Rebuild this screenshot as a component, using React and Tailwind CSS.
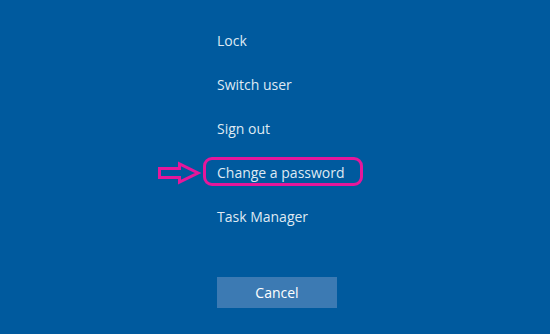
import React from 'react';

const items = ['Lock', 'Switch user', 'Sign out', 'Change a password', 'Task Manager'];

const Arrow = () => (
  <svg
    className="absolute left-[-60px] top-[11px]"
    width="46"
    height="24"
    viewBox="0 0 46 24"
    fill="none"
  >
    <path
      d="M2.5 7.5 H22.5 V3 L41 12 L22.5 21 V16.5 H2.5 Z"
      stroke="#e6179b"
      strokeWidth="3"
      strokeLinejoin="miter"
    />
  </svg>
);

const App = () => {
  return (
    <div
      className="w-[550px] h-[334px] bg-[#005a9e] text-[#dfe9f3] overflow-hidden"
      style={{ fontFamily: '"Open Sans", "Noto Sans", sans-serif' }}
    >
      <div className="flex flex-col pl-[217px] pt-[18px]">
        {items.map((name) => (
          <div key={name} className="relative h-[44px] flex items-center text-[14px]">
            {name === 'Change a password' && (
              <>
                <Arrow />
                <div className="absolute left-[-14px] top-[7px] w-[160px] h-[29px] rounded-[9px] border-[3px] border-[#e6179b]" />
              </>
            )}
            <span className="relative">{name}</span>
          </div>
        ))}
        <button className="mt-[39px] w-[120px] h-[31px] bg-[#3c7ab3] text-white text-[14px] flex items-center justify-center">
          Cancel
        </button>
      </div>
    </div>
  );
};

export default App;
